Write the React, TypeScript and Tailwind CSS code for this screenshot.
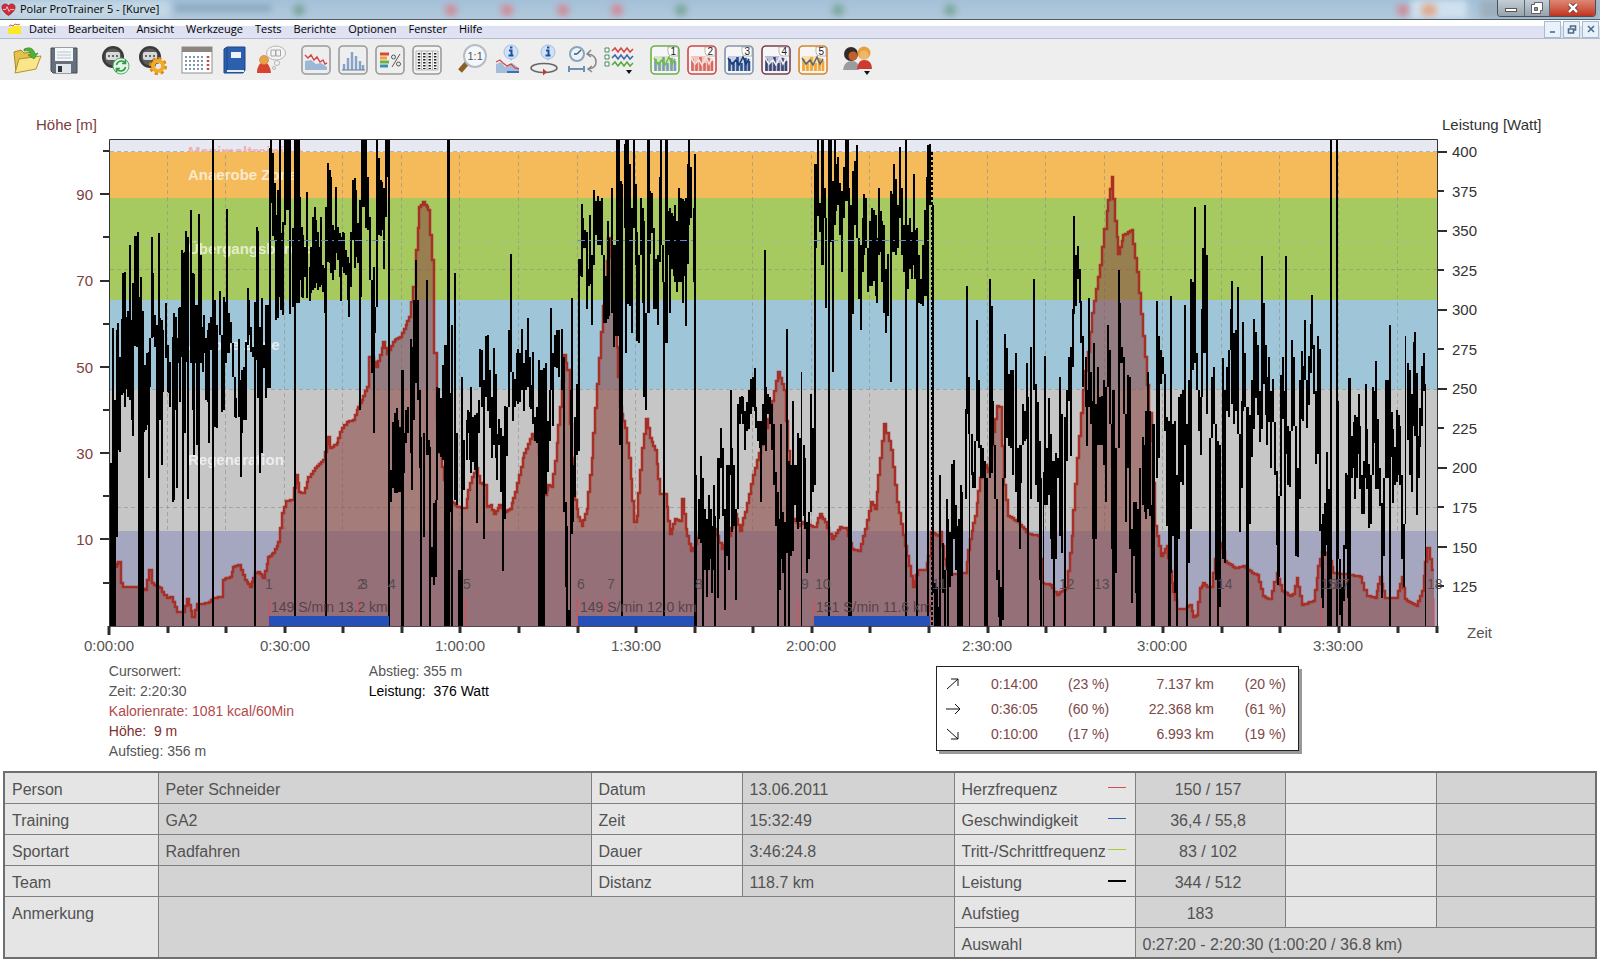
import type { ReactNode } from 'react'

type Section = {
  x: number
  y: number
  sx: number
  sy: number
  power: string
  height: string
}

// Each section keeps its samples in raster units, scaled to the plot by sx / sy.
// power: x,max,min[,width]   height: x,y
const sections: Section[] = [
  {
    x: 0, y: 100, sx: 3, sy: 3,
    power: `333,1090,1578,8 339,683,1578 345,900,1578 350,690,1310 354,668,1050 359,770,1055 364,658,884 369,520,880 374,515,920 379,650,866
      384,632,890 389,435,900 394,660,960 399,550,1007 404,407,738 409,408,740 414,395,735 418,590,900 422,640,1578,14 422,530,700 427,633,1578 432,870,995
      436,795,990,7 441,760,975 446,755,1135 449,715,860 454,410,715 459,520,710 464,645,740 472,675,1578,9 475,400,760 479,655,960 484,660,1095
      489,690,875 497,610,775 502,735,875 505,785,880 510,785,920 517,710,1205 521,640,1200 526,650,930 530,715,1165 535,625,790 540,620,905
      545,450,770 549,460,1578,6 554,455,1000 558,392,785 563,410,1198 571,330,790 577,520,930 581,522,1065 586,615,790 591,615,1035 596,343,1578
      602,465,790 607,680,815 611,645,760 618,715,900 623,690,905 627,670,1028 633,650,750 640,118,1578,6 645,600,980 650,675,985 658,573,705
      664,780,935 670,590,930 676,605,790 681,328,760 686,640,760 691,665,730 698,770,830 703,890,950 708,895,955 716,718,950 722,840,1130
      726,810,1000 731,800,960 736,725,960 742,565,735 747,600,705 752,680,755 758,740,770 764,605,1578 769,380,780 774,392,895 779,680,1120
      785,595,1060 790,735,805 796,615,895 801,615,865 806,615,865 808,145,865 813,118,310 818,160,408 823,250,420 828,345,660 833,270,655
      838,118,590 843,400,630 848,365,645 853,330,375 861,118,305,18 870,118,643 877,385,620 884,118,1548,6 892,118,610,15 898,290,540 904,380,590
      909,405,595 914,440,530 921,275,595 928,500,602 933,440,580 938,350,570 943,320,565 948,360,550 953,395,570 958,440,560 963,350,555
      968,495,575 974,505,640 978,320,1548 983,190,485 988,210,490 993,230,520 998,375,540 1003,390,510 1008,260,460 1013,380,480 1018,400,530
      1022,410,602 1027,395,500 1032,400,520 1037,450,525 1042,470,600 1047,490,652 1052,395,560 1058,240,420 1063,235,505 1068,270,470 1073,370,490
      1079,300,930 1083,300,590 1091,118,320,14 1098,118,385 1103,230,390 1108,350,540 1116,650,800,9 1116,560,820 1120,500,998 1124,620,700 1130,118,380
      1136,175,405 1141,240,408 1146,245,390 1151,265,508 1156,200,350 1162,118,230,12 1167,118,1578,6 1173,1110,1205 1179,965,1165 1184,940,1178
      1189,925,1178 1194,960,1175 1200,980,1175 1207,810,1578,7 1212,1000,1120 1217,930,1030 1223,920,1000 1231,718,1060 1236,740,1170 1241,600,960
      1247,480,850 1252,600,900 1258,870,1105 1263,1010,1578,8 1270,1000,1310 1280,540,1065 1285,1020,1065 1290,1040,1578 1296,1340,1430
      1301,1210,1455,7 1306,1200,1430 1311,860,1000 1316,865,1060 1321,895,1070 1328,795,1080 1337,735,1578,11 1345,118,1578,9 1350,880,1235
      1356,675,1578 1363,520,1200 1369,1000,1215 1378,1410,1578,9 1384,830,1578 1390,1020,1170 1399,960,1080 1403,930,1000 1409,935,1080
      1413,860,1120 1419,950,1085 1424,945,1110 1430,940,1270 1436,900,1000`,
    height: `345,1400 355,1385 362,1450 370,1460 415,1460 435,1470 447,1410 455,1450 480,1465 500,1495 515,1490 530,1535 550,1535 562,1498 577,1550
      590,1512 620,1510 640,1495 660,1490 668,1440 690,1430 700,1400 715,1395 735,1440 750,1460 765,1420 775,1415 790,1435 805,1370 820,1360 835,1325
      845,1240 857,1203 875,1200 888,1125 897,1175 910,1180 925,1130 945,1105 970,1080 985,1010 990,1045 1010,1030 1020,995 1040,965 1060,960 1070,930
      1085,900 1100,860 1107,770 1118,770 1128,800 1140,765 1150,725 1162,762 1178,725 1200,710 1228,650 1240,560 1248,450 1257,320 1270,307 1285,330
      1295,480 1303,760 1310,960 1320,1060 1333,1140 1345,1200 1370,1220 1395,1225 1405,1170 1415,1130 1427,1105 1440,1150`,
  },
  {
    x: 480, y: 120, sx: 3, sy: 2.958,
    power: `0,678,790 6,680,850 11,770,1240 16,640,820 22,635,860 28,740,910 34,820,1000 40,675,960 46,750,1000 51,930,1065 56,885,960 62,910,1100
      68,935,1335 74,845,1180 80,850,995 86,620,850 92,397,745 98,755,890 104,765,850 109,690,830 114,678,840 119,690,835 126,618,800 132,720,860
      137,680,800 142,585,790 148,700,850 153,785,855 158,685,900 163,880,950 169,850,955 176,710,1100 175,1100,1310 185,740,1497,20 191,735,1497,6 196,718,1105
      203,890,1040 208,800,950 213,555,800 219,690,905 225,635,730 231,620,735 237,620,760 244,618,800 250,700,1160 256,1130,1380 261,1200,1497
      267,1450,1497,7 270,800,1497,3 274,527,1225 279,1020,1190 285,880,1115 290,780,990 295,410,980 300,410,460 304,247,465 309,290,380 315,325,380
      320,330,560 325,440,490 330,280,485 336,400,605 342,207,430 348,240,340 354,225,370 360,240,370 366,230,400 371,400,600 377,460,600
      382,300,590 387,350,580 394,200,570 400,370,670 407,370,640,6 414,57,640,12 421,180,960,8 427,190,1467,6 433,72,320 438,57,690 443,57,545
      449,130,550 455,260,630 461,60,320 466,190,430 471,330,655 476,400,660 482,230,400 487,260,540 492,300,820 497,570,858 504,57,420,9
      510,210,395 516,215,335 522,320,560 527,410,560 532,400,605 538,170,420 543,57,370 549,370,480 553,480,1467,6 559,57,660,9 565,270,400
      570,260,570 575,275,440 580,285,460 585,250,480 591,300,510 597,200,480 602,230,480 607,235,540 612,240,460 616,230,610 622,130,425
      627,57,310 633,140,290 640,260,480 645,100,1497,5 650,1050,1497,3 656,1120,1240 663,995,1250 668,1060,1497 674,1150,1330 680,1180,1410
      686,1110,1330 691,1150,1300 695,1200,1400 700,1080,1330 706,1170,1497,6 712,1000,1415 716,1000,1180 721,910,1030 727,970,1170 733,1150,1450
      739,1020,1290 745,1020,1330 751,800,1050 756,970,1220 762,1020,1200 767,1150,1420 772,840,980 778,820,900 784,815,870 789,818,900
      795,860,975 801,835,920 806,800,915 812,765,870 817,760,850 823,735,860 828,850,910 833,890,950 838,890,970 843,890,1130 848,840,960
      853,385,960 858,790,980 864,810,870 869,820,900 875,840,975 881,900,1080 887,1040,1200 893,1100,1497 898,1180,1390 903,900,1300
      909,1160,1340 915,1190,1497 921,618,1280 927,1010,1497 934,1020,1290,6 938,830,1275 944,1020,1140 949,1020,1190 954,925,1210 960,940,1190
      964,745,1497,3 970,960,1170 975,1000,1210 981,1190,1340 986,1160,1300 992,810,980 998,910,1100 1003,130,1080 1008,130,380 1013,57,285
      1019,245,330 1027,57,430,9 1033,200,290 1038,370,555 1047,57,1467,6 1051,57,360,8 1057,180,745 1063,57,310 1068,130,270 1074,110,250
      1080,185,340 1085,210,450 1091,140,290 1100,57,240,12 1106,200,1467,7 1113,250,1467 1119,150,575 1125,120,310 1131,75,350 1137,380,530
      1141,370,620 1147,290,450 1152,220,400 1158,230,380 1163,400,510 1170,300,490 1175,260,490 1180,265,475 1186,280,520 1191,350,540
      1196,200,400 1201,270,390 1206,300,480 1212,310,570 1218,440,630 1224,395,580 1231,210,775 1236,220,390 1241,130,390 1247,175,400
      1253,250,380 1258,80,290 1264,200,400 1270,310,450 1278,57,1467,7 1284,310,500 1290,290,440 1295,330,470 1300,160,430 1305,325,470
      1311,320,1467,8 1317,400,540 1323,470,545 1329,370,550 1334,265,520 1339,170,520 1344,75,1467,6 1350,70,250 1358,990,1400 1364,1370,1497
      1370,1380,1497 1376,1440,1497`,
    height: `0,1075 12,1080 20,1145 32,1140 42,1165 58,1140 75,1160 90,1150 105,1100 128,1000 155,930 170,950 195,1110 205,1080 215,1085 225,1010
      240,850 253,695 262,740 270,900 280,1100 295,1175 305,1200 320,1150 335,1000 350,780 370,550 385,350 395,460 405,580 420,850 435,910 447,1000
      462,1190 470,1170 485,970 497,885 510,940 525,975 540,1105 555,1105 570,1225 585,1180 598,1185 605,1120 617,1210 632,1275 645,1255 665,1200
      705,1210 725,1270 745,1230 765,1165 780,1215 795,1160 820,1050 850,940 875,830 893,745 912,800 925,980 940,1180 955,1200 965,1190 1005,1205
      1020,1165 1035,1190 1055,1240 1080,1205 1100,1210 1115,1270 1135,1275 1155,1210 1172,1130 1185,1150 1200,1000 1213,900 1232,975 1250,1130
      1275,1260 1298,1380 1315,1330 1335,1330 1345,1290 1352,1220 1375,1230`,
  },
  {
    x: 940, y: 120, sx: 3, sy: 2.958,
    power: `0,1050,1497 9,1250,1400 14,1330,1497 19,1120,1290 24,1180,1497 29,1220,1380 35,1018,1350 42,1005,1240 47,1140,1330 52,1200,1497
      60,1180,1497,15 61,1080,1497 66,1100,1370 76,855,1120 80,490,870 85,760,930 88,835,1497,3 94,930,1050 98,1040,1090 104,950,1090 111,592,950
      117,770,970 123,960,1060 128,970,1060 135,1010,1497,7 141,1060,1497 149,470,800 154,550,1045 159,830,960 164,980,1120 170,1130,1360
      176,1330,1470 182,1380,1497,8 188,1060,1480 193,632,800 199,675,940 205,750,965 211,740,970 217,740,1050 226,688,1100 232,970,1190
      238,960,1270 243,960,1075 249,840,960 255,860,950 261,720,945 264,820,1497 273,670,1120 281,470,800 287,780,1080 292,835,1130
      298,950,1360 302,1060,1497,7 309,1040,1497,3 315,698,1140 321,970,1140 327,822,1110 333,930,1240 339,1010,1300,10 341,1300,1497 346,985,1260
      352,1000,1060 360,760,1230 366,870,1280 374,880,1497 379,800,1010 385,700,830 391,670,995 397,560,730 402,285,575 408,400,550
      413,373,470 418,440,540 423,535,660 429,640,790 436,700,850 440,800,965 445,528,850 452,745,900 457,830,1240 462,660,1497 467,840,1240
      474,732,960 480,820,960 486,815,960 491,770,1020 496,790,1130 504,605,780 509,680,900 515,1010,1270 520,800,1497,8 527,970,1340
      535,443,830 540,540,720 546,670,720 551,700,870 557,900,1190 563,755,1030 569,760,1270 575,1210,1430 581,1130,1290 587,1130,1400
      593,1150,1497,9 599,1030,1497 607,938,1140 613,960,1160 618,860,1180 623,745,1150 629,860,1170 635,1140,1497 641,900,1497,9 650,535,1060
      656,640,1000 663,680,780 668,700,750 674,870,920 681,880,1200 688,890,1497,10 693,520,1340 699,900,1230 703,890,1400 711,1050,1497,6
      717,820,1240 722,810,1070 727,800,1080 733,548,960 740,900,1497,7 746,770,1310 752,470,1210 757,480,740 763,258,720 769,690,800
      775,830,920 781,820,990 786,560,760 789,380,690 795,250,690 800,400,870 809,940,1497,7 816,760,880 822,732,900 828,1060,1360 834,950,1497
      840,960,1440,8 847,705,1300 853,800,1310 859,730,860 865,680,880 872,560,680 876,477,840 882,630,900 888,620,860 894,495,930
      899,940,1220 904,830,1090 909,598,860 915,690,850 922,1020,1497,7`,
    height: `0,1220 12,1300 30,1345 75,1340 90,1240 105,1170 120,1060 135,1020 145,1040 155,960 170,845 182,850 192,1080 205,1170 235,1190 265,1225
      293,1230 305,1370 330,1375 350,1405 378,1385 395,1230 410,1000 430,800 455,570 480,430 500,270 515,170 525,300 535,395 550,340 575,325 590,450
      615,700 635,950 645,1200 663,1290 680,1260 695,1370 710,1445 735,1445 750,1435 760,1470 770,1465 780,1385 790,1370 800,1380 815,1380 825,1300
      845,1250 855,1305 885,1325 910,1320 930,1335`,
  },
  {
    x: 1250, y: 110, sx: 3, sy: 2.85,
    power: `0,870,1180 5,770,990 11,597,910 17,632,820 23,670,870 28,800,945 35,415,910 41,550,780 46,670,870 51,760,955 57,705,890 63,800,1020
      69,768,890 75,900,1040 79,1030,1240 83,1100,1355 87,1100,1330 93,755,1040 98,705,880 105,800,1470,7 108,415,980 113,900,1070 118,915,1075
      124,655,870 130,705,900 136,900,1270 143,1020,1275 149,770,1110 154,687,880 159,730,885 164,598,770 170,770,905 176,700,840 181,610,750
      186,528,680 191,670,810 197,800,1010 203,645,980 208,680,1200 214,1180,1390 219,1150,1420 223,1120,1270 229,975,1240 234,1080,1470,9
      241,85,1470 259,85,1470 264,830,1280 269,1330,1440 275,1360,1470 281,1240,1400 287,1035,1250 292,1040,1390 299,765,1470,8 305,930,1050
      310,890,1020 315,870,1110 320,875,1050 325,810,980 330,900,1080 336,1040,1150 342,1000,1150 346,780,1050 351,910,1080 357,1010,1190
      362,1040,1180 367,790,950 373,800,950 378,715,1080 383,880,1080 388,1020,1130 394,1120,1390 400,1050,1270 406,770,1000 412,770,1050
      418,613,1470 424,860,990 429,910,1120 434,960,1070 439,855,1060 445,870,1040 450,900,1070 455,1040,1280 461,1180,1360 467,645,1160,3
      472,720,940 478,740,1040 484,810,1090 490,660,900 494,632,930 500,750,1155 505,930,1050 510,850,960 515,730,900 520,693,800 525,780,1470,3`,
    height: `0,1315 20,1325 38,1385 60,1395 80,1320 95,1370 120,1385 130,1380 140,1333 155,1410 190,1400 205,1300 215,1260 235,1270 250,1320
      300,1325 330,1330 350,1385 375,1390 390,1330 405,1390 440,1390 455,1330 465,1395 500,1415 515,1370 532,1248 545,1310 553,1310`,
  },
]

const parse = (data: string) => data.trim().split(/\s+/).map((s) => s.split(',').map(Number))

const powerBars = sections.flatMap((s) =>
  parse(s.power).map(([x, max, min, w = 5], i, all) => {
    let top = max
    let bottom = min
    // neighbouring bars have to touch, the trace never breaks
    if (i > 0 && x - all[i - 1][0] <= 8) {
      top = Math.min(top, all[i - 1][2])
      bottom = Math.max(bottom, all[i - 1][1])
    }
    return {
      x: s.x + (x - w / 2) / s.sx,
      y: s.y + top / s.sy,
      w: Math.max(w / s.sx, w < 5 ? 1 : 2),
      h: (bottom - top) / s.sy,
    }
  }),
)

const heightPoints = sections.flatMap((s) =>
  parse(s.height).map(([x, y]) => [s.x + x / s.sx, s.y + y / s.sy]),
)

// small stair steps between the samples, like the altimeter gives them
const heightLine = heightPoints
  .map(([x, y], i) => {
    if (i === 0) return `M${x} ${y}`
    const [px, py] = heightPoints[i - 1]
    const steps = Math.max(1, Math.round((x - px) / 2))
    let d = ''
    for (let k = 1; k <= steps; k++) {
      d += `H${Math.round(px + ((x - px) * k) / steps)}V${Math.round(py + ((y - py) * k) / steps)}`
    }
    return d
  })
  .join('')

const zones = [
  { y: 140, h: 12, color: '#e6e9f1' },
  { y: 152, h: 46, color: '#f5ba5a' },
  { y: 198, h: 102, color: '#a7ca60' },
  { y: 300, h: 89, color: '#9fc5d8' },
  { y: 389, h: 142, color: '#c6c6c6' },
  { y: 531, h: 95, color: '#a5a7c0' },
]

const zoneLabels = [
  { y: 180, text: 'Anaerobe Zone' },
  { y: 254, text: 'Übergangsbereich' },
  { y: 350, text: 'Aerobe Zone' },
  { y: 465, text: 'Regeneration' },
]

const lapBars = [
  { x: 269, w: 120, label: '149 S/min 13.2 km' },
  { x: 578, w: 116, label: '149 S/min 12.0 km' },
  { x: 814, w: 116, label: '151 S/min 11.6 km' },
]

const markers: [number, string][] = [
  [265, '1'], [357, '2'], [360, '3'], [388, '4'], [463, '5'], [577, '6'], [607, '7'], [695, '8'], [801, '9'], [815, '10'],
  [932, '11'], [1059, '12'], [1094, '13'], [1217, '14'], [1321, '15'], [1327, '16'], [1334, '17'], [1427, '18'],
]

const markerLines = [269, 358, 389, 465, 577, 605, 695, 798, 814, 930, 1064, 1094, 1217, 1321, 1328, 1434]

function Chart() {
  const minutes = Array.from({ length: 23 }, (_, i) => i)
  return (
    <svg viewBox="0 80 1600 577" className="block w-full font-['Liberation_Sans',Arial,sans-serif]" fontSize="15">
      <defs>
        <clipPath id="maxZone">
          <rect x="109" y="139" width="1328" height="13" />
        </clipPath>
      </defs>
      {zones.map((z) => (
        <rect key={z.y} x="109" y={z.y} width="1328" height={z.h} fill={z.color} shapeRendering="crispEdges" />
      ))}
      <g stroke="#8d9184" strokeOpacity="0.6" strokeDasharray="4 3">
        {minutes.slice(1).map((i) => (
          <line key={i} x1={Math.round(109 + i * 58.57) - 0.5} x2={Math.round(109 + i * 58.57) - 0.5} y1="155" y2="531" />
        ))}
        {[151.5, 269.5, 389.5, 507.5].map((y) => (
          <line key={y} x1="110" x2="1437" y1={y} y2={y} />
        ))}
      </g>
      <line x1="110" x2="1437" y1="240.5" y2="240.5" stroke="#9cc58b" strokeDasharray="7 4 2 4" />

      <g fontWeight="bold">
        <text x="188" y="157" fill="#f3b0a8" clipPath="url(#maxZone)">Maximaltraining</text>
        {zoneLabels.map((z) => (
          <text key={z.text} x="188" y={z.y} fill="#ffffff" fillOpacity="0.7">{z.text}</text>
        ))}
      </g>

      <path d={`${heightLine}V626H115Z`} fill="#8b4642" fillOpacity="0.57" />
      <path d={heightLine} fill="none" stroke="#a62f26" strokeWidth="2.5" />
      {markerLines.map((x) => (
        <line key={x} x1={x} x2={x} y1="598" y2="626" stroke="#dd4a55" />
      ))}

      <g fill="#000000" shapeRendering="crispEdges">
        {powerBars.map((b, i) => (
          <rect key={i} x={b.x} y={b.y} width={b.w} height={b.h} />
        ))}
      </g>
      <g stroke="#5f86d8" strokeDasharray="7 4 2 4">
        <line x1="270" x2="389" y1="240.5" y2="240.5" />
        <line x1="578" x2="695" y1="240.5" y2="240.5" />
        <line x1="814" x2="930" y1="240.5" y2="240.5" />
      </g>
      <line x1="932" x2="932" y1="152" y2="626" stroke="#000000" strokeWidth="2" strokeDasharray="3 2" />

      {lapBars.map((lap) => (
        <g key={lap.x}>
          <rect x={lap.x} y="616" width={lap.w} height="10" fill="#2450b8" />
          <text x={lap.x + 2} y="612" fontSize="14" fill="#574349">{lap.label}</text>
        </g>
      ))}
      <g fontSize="14" fill="#574b50">
        {markers.map(([x, label]) => (
          <text key={label} x={x} y="589">{label}</text>
        ))}
      </g>

      <path d="M109.5 626V139.5H1437.5V626" fill="none" stroke="#333333" />
      <line x1="109" x2="1438" y1="626.5" y2="626.5" stroke="#55484c" />

      <g stroke="#2e2e2e" strokeWidth="2">
        {[194, 281, 367, 453, 539].map((y) => (
          <line key={y} x1="100" x2="109" y1={y} y2={y} />
        ))}
        {[151, 237, 324, 410, 496, 583].map((y) => (
          <line key={y} x1="103" x2="109" y1={y} y2={y} />
        ))}
        {minutes.map((i) => (
          <line key={i} x1={Math.round(109 + i * 58.57)} x2={Math.round(109 + i * 58.57)} y1="626" y2={i === 0 ? 635 : 633} strokeWidth="3" />
        ))}
        <line x1="1437" x2="1437" y1="626" y2="633" strokeWidth="3" />
        {Array.from({ length: 12 }, (_, i) => (
          <line key={i} x1="1438" x2={i % 2 ? 1444 : 1447} y1={Math.round(152 + i * 39.45)} y2={Math.round(152 + i * 39.45)} />
        ))}
      </g>

      <g fill="#7c4040">
        <text x="36" y="130">Höhe [m]</text>
        {[90, 70, 50, 30, 10].map((v, i) => (
          <text key={v} x="93" y={Math.round(200 + i * 86.3)} textAnchor="end">{v}</text>
        ))}
      </g>
      <g fill="#333333">
        <text x="1442" y="130">Leistung [Watt]</text>
        {Array.from({ length: 12 }, (_, i) => (
          <text key={i} x="1452" y={Math.round(157 + i * 39.55)}>{400 - i * 25}</text>
        ))}
      </g>
      <g fill="#555555">
        {['0:00:00', '0:30:00', '1:00:00', '1:30:00', '2:00:00', '2:30:00', '3:00:00', '3:30:00'].map((t, i) => (
          <text key={t} x={Math.round(109 + i * 175.5)} y="651" textAnchor="middle">{t}</text>
        ))}
        <text x="1467" y="638">Zeit</text>
      </g>
    </svg>
  )
}

const framed = (stroke: string, fill: string) => (
  <rect x="2" y="2" width="28" height="28" rx="4" fill={fill} stroke={stroke} strokeWidth="1.6" />
)

function HrMonitor() {
  return (
    <>
      <circle cx="14" cy="13" r="11" fill="#3a3a3a" />
      <circle cx="14" cy="13" r="8.500" fill="#5c5c5c" />
      <rect x="7" y="8" width="14" height="8" rx="2" fill="#d9d9d9" />
      <path d="M9 12h2M13 12h2M17 12h2" stroke="#444" strokeWidth="1.6" />
    </>
  )
}

function InfoBubble({ x }: { x: number }) {
  return (
    <>
      <path d={`M${x - 2} 12l2 5l3-5z`} fill="#9fc3ea" />
      <circle cx={x} cy="8" r="7" fill="#cfe2f7" stroke="#9fbfe0" />
      <path d={`M${x - 1} 3.500h2.400M${x - 2} 6.500h2.500v4.500M${x - 2.5} 11.500h5`} fill="none" stroke="#1f4fa0" strokeWidth="2" />
    </>
  )
}

function CurveIcon({ n, frame, top, bars, line }: { n: number; frame: string; top: string; bars: string; line: string }) {
  return (
    <>
      {framed(frame, '#f6f6f6')}
      <path d="M5 27V12h15l7 3v12z" fill={top} />
      <path d="M6.500 27V15M10.500 27V18M14.500 27V13M18.500 27V19M22.500 27V14M26 27V17" stroke={bars} strokeWidth="2.6" />
      <path d="M5 14l4 6l4-4l3 5l4-8l3 7l3-5" fill="none" stroke={line} strokeWidth="1.5" />
      <path d="M19 3h8q2 0 2 2v7h-6q-4 0-4-4z" fill="#ffffff" stroke="#999" strokeWidth="0.700" />
      <text x="21.500" y="11" fontSize="10" fill="#222" className="font-['Liberation_Sans',Arial,sans-serif]">{n}</text>
    </>
  )
}

const toolGroups: { name: string; icon: ReactNode }[][] = [
  [
    {
      name: 'Öffnen',
      icon: (
        <>
          <path d="M3 8l7-2l3 3l10-1v4L9 16L5 28z" fill="#e2c24d" stroke="#a98724" />
          <path d="M8 15l22-3l-5 13L4 29z" fill="#fae68a" stroke="#b5932b" />
          <path d="M13 5q9-4 11 5l3-1l-4 6l-6-4l3-1q-1-4-7-3z" fill="#4fb33b" stroke="#2f8123" strokeWidth="0.600" />
        </>
      ),
    },
    {
      name: 'Speichern',
      icon: (
        <>
          <path d="M3 4h26v25H5l-2-2z" fill="#66707c" stroke="#454d57" />
          <rect x="7" y="4" width="18" height="13" fill="#f4f7fa" />
          <path d="M9 8h14M9 11h14M9 14h14" stroke="#b8c4d0" />
          <rect x="8" y="20" width="15" height="9" fill="#dfe6ec" />
          <rect x="10" y="22" width="4" height="6" fill="#30363d" />
        </>
      ),
    },
  ],
  [
    {
      name: 'Übertragung',
      icon: (
        <>
          <HrMonitor />
          <circle cx="22" cy="22" r="8" fill="#e4f4e6" stroke="#5cab6b" />
          <path d="M17.500 21q1-4 5-4q2 0 4 2M26.500 16v3.500H23M26.500 23q-1 4-5 4q-2 0-4-2M17.500 28v-3.500H21" fill="none" stroke="#2f9a4a" strokeWidth="1.700" />
        </>
      ),
    },
    {
      name: 'Einstellungen',
      icon: (
        <>
          <HrMonitor />
          <circle cx="22" cy="22" r="7" fill="none" stroke="#d98a12" strokeWidth="4" strokeDasharray="3 2.500" />
          <circle cx="22" cy="22" r="5" fill="none" stroke="#f3aa27" strokeWidth="4" />
          <circle cx="22" cy="22" r="2.500" fill="#e9e9e9" />
        </>
      ),
    },
  ],
  [
    {
      name: 'Kalender',
      icon: (
        <>
          <rect x="1" y="3" width="30" height="26" fill="#ffffff" stroke="#8e8e8e" />
          <rect x="1" y="3" width="30" height="5" fill="#8d8580" />
          <path d="M4 13h20M4 17h20M4 21h20M4 25h20" stroke="#8494ad" strokeWidth="2" strokeDasharray="2 2" />
          <path d="M27 12v14" stroke="#cc4444" strokeWidth="2.500" strokeDasharray="2 2" />
        </>
      ),
    },
    {
      name: 'Tagebuch',
      icon: (
        <>
          <path d="M6 5l3-2h18v23l-2 3H6z" fill="#2c5fae" stroke="#1d4687" />
          <path d="M9 27h17" stroke="#e5edf7" strokeWidth="2" />
          <path d="M9 4v22" stroke="#1d4687" />
          <rect x="13" y="8" width="10" height="6" fill="#eef3fa" />
        </>
      ),
    },
    {
      name: 'Person',
      icon: (
        <>
          <path d="M2 29q0-10 7-11q6 1 7 11z" fill="#d8432f" />
          <circle cx="9" cy="16" r="4.500" fill="#e9a04a" stroke="#c07c2a" strokeWidth="0.600" />
          <ellipse cx="21" cy="9" rx="9.500" ry="7" fill="#f4f4f4" stroke="#b5b5b5" />
          <path d="M16 6h4.500v6H16zM21 6h4.500v6H21z" fill="none" stroke="#a5a5a5" />
          <circle cx="22" cy="19" r="2.500" fill="#f4f4f4" stroke="#b5b5b5" />
          <circle cx="19" cy="24" r="1.500" fill="#f4f4f4" stroke="#b5b5b5" />
        </>
      ),
    },
  ],
  [
    {
      name: 'Kurve',
      icon: (
        <>
          {framed('#9b9b9b', '#eeeeee')}
          <path d="M5 26V17l6-1l5 4l5-1l6 4v3z" fill="#9db8d6" />
          <path d="M5 11l3 3l3-3l3 5l3-3l3 5l3-2l2 4l2-1" fill="none" stroke="#d84545" strokeWidth="1.400" />
        </>
      ),
    },
    {
      name: 'Verteilung',
      icon: (
        <>
          {framed('#9b9b9b', '#eeeeee')}
          <path d="M7 26V20M11 26V14M15 26V8M19 26V12M23 26V17M26 26V21" stroke="#86a2c4" strokeWidth="2.400" />
          <path d="M5 26h23" stroke="#647b99" />
        </>
      ),
    },
    {
      name: 'Zonen',
      icon: (
        <>
          {framed('#9b9b9b', '#eeeeee')}
          <path d="M6 10h9" stroke="#d84a33" strokeWidth="3" />
          <path d="M6 14h7" stroke="#f0a530" strokeWidth="3" />
          <path d="M6 18h9" stroke="#6bb04a" strokeWidth="3" />
          <path d="M6 22h8" stroke="#3f8fa8" strokeWidth="3" />
          <path d="M26 10l-8 13" stroke="#555" />
          <circle cx="19.500" cy="13" r="2" fill="none" stroke="#555" />
          <circle cx="24.500" cy="20" r="2" fill="none" stroke="#555" />
        </>
      ),
    },
    {
      name: 'Tabelle',
      icon: (
        <>
          {framed('#9b9b9b', '#f4f4f4')}
          <path d="M5 7h22M5 26h22M5 7v19M10.500 7v19M16 7v19M21.500 7v19M27 7v19" stroke="#aaaaaa" strokeWidth="0.800" />
          <path d="M8 9v16M13.300 9v16M18.700 9v16M24.200 9v16" stroke="#222" strokeWidth="2.400" strokeDasharray="1.500 1.500" />
        </>
      ),
    },
  ],
  [
    {
      name: 'Zoom 1:1',
      icon: (
        <>
          <path d="M11 19l-7 8" stroke="#8c5f26" strokeWidth="5" />
          <circle cx="19" cy="12" r="11" fill="#f5f8fb" stroke="#b4bdc6" strokeWidth="2" />
          <text x="11.500" y="16" fontSize="11" fill="#555" className="font-['Liberation_Sans',Arial,sans-serif]">1:1</text>
        </>
      ),
    },
    {
      name: 'Info Kurve',
      icon: (
        <>
          <path d="M3 29V20l5-2l4 5l7-4l7 5v5z" fill="#a3bddb" />
          <path d="M14 27h12v2H14z" fill="#3d6fb4" />
          <path d="M3 18l4-2l3 3l4 3l4-2l4 4l4 1" fill="none" stroke="#d84545" strokeWidth="1.300" />
          <InfoBubble x={18} />
        </>
      ),
    },
    {
      name: 'Info Runde',
      icon: (
        <>
          <ellipse cx="14" cy="24" rx="13" ry="4.500" fill="none" stroke="#666" strokeWidth="1.500" />
          <path d="M13 24.500v7l4-3.500z" fill="#c23636" />
          <InfoBubble x={18} />
        </>
      ),
    },
    {
      name: 'Zeit / Distanz',
      icon: (
        <>
          <circle cx="10" cy="10" r="7" fill="#eaf3fa" stroke="#8aa5b8" strokeWidth="2" />
          <path d="M10 10l4-4M10 10h-3" stroke="#3b5a70" strokeWidth="1.400" />
          <path d="M2 22v6M17 22v6M2 25h15" stroke="#6d90b0" strokeWidth="2" />
          <path d="M21 10q8 1 8 8q0 6-7 7M24 6l-4 4l4 3M25 22l-4 3l4 3" fill="none" stroke="#888" strokeWidth="1.500" />
        </>
      ),
    },
    {
      name: 'Kurven wählen',
      icon: (
        <>
          <path d="M1 4h4v4H1zM1 11h4v4H1zM1 18h4v4H1z" fill="#ffffff" stroke="#4b8a5a" />
          <path d="M8 7l3-3l3 4l3-4l3 4l3-4l3 4l3-3" fill="none" stroke="#d84545" strokeWidth="1.500" />
          <path d="M8 14l3-3l3 4l3-4l3 4l3-4l3 4l3-3" fill="none" stroke="#3f66a8" strokeWidth="1.500" />
          <path d="M8 21l3-3l3 4l3-4l3 4l3-4l3 4l3-3" fill="none" stroke="#53ab3f" strokeWidth="1.500" />
          <path d="M22 26h6l-3 4z" fill="#111" />
        </>
      ),
    },
  ],
  [
    { name: 'Ansicht 1', icon: <CurveIcon n={1} frame="#6fae4b" top="#d5e6c2" bars="#7d9db8" line="#6fbf3a" /> },
    { name: 'Ansicht 2', icon: <CurveIcon n={2} frame="#cf4646" top="#f2c5c0" bars="#d9695f" line="#f3e3e1" /> },
    { name: 'Ansicht 3', icon: <CurveIcon n={3} frame="#8794ad" top="#c3d2e8" bars="#2d5089" line="#1c3a70" /> },
    { name: 'Ansicht 4', icon: <CurveIcon n={4} frame="#7a3f52" top="#b9bdd6" bars="#3d4672" line="#f0f0f5" /> },
    { name: 'Ansicht 5', icon: <CurveIcon n={5} frame="#d8842c" top="#f8e0b3" bars="#f0a637" line="#5b6675" /> },
  ],
  [
    {
      name: 'Personen',
      icon: (
        <>
          <path d="M1 26q1-9 9-9q7 0 7 9z" fill="#9a9ca0" />
          <path d="M15 25q1-9 7-9q8 0 8 9z" fill="#cf3a2e" />
          <circle cx="9" cy="10" r="7" fill="#332b28" />
          <circle cx="11" cy="12" r="4.500" fill="#c25f2a" />
          <circle cx="22" cy="9" r="6.500" fill="#e3a23b" />
          <circle cx="22" cy="11" r="4.500" fill="#f0b76a" />
          <path d="M22 27h6l-3 4z" fill="#111" />
        </>
      ),
    },
  ],
]

const cursorLeft = [
  { text: 'Cursorwert:', color: 'text-[#555555]' },
  { text: 'Zeit: 2:20:30', color: 'text-[#555555]' },
  { text: 'Kalorienrate: 1081 kcal/60Min', color: 'text-[#b04a4a]' },
  { text: 'Höhe:  9 m', color: 'text-[#7c3030]' },
  { text: 'Aufstieg: 356 m', color: 'text-[#555555]' },
]

const slopes = [
  { d: 'M2 13L13 3M6 3h7v7', label: 'Anstieg', time: '0:14:00', share: '(23 %)', km: '7.137 km', kmShare: '(20 %)' },
  { d: 'M1 8h14M10 3l5 5l-5 5', label: 'Flach', time: '0:36:05', share: '(60 %)', km: '22.368 km', kmShare: '(61 %)' },
  { d: 'M2 3l11 10M13 6v7H6', label: 'Gefälle', time: '0:10:00', share: '(17 %)', km: '6.993 km', kmShare: '(19 %)' },
]

const summary = [
  ['Person', 'Peter Schneider', 'Datum', '13.06.2011', 'Herzfrequenz', 'bg-[#d45050]', '150 / 157'],
  ['Training', 'GA2', 'Zeit', '15:32:49', 'Geschwindigkeit', 'bg-[#3560b8]', '36,4 / 55,8'],
  ['Sportart', 'Radfahren', 'Dauer', '3:46:24.8', 'Tritt-/Schrittfrequenz', 'bg-[#a9cc3a]', '83 / 102'],
  ['Team', '', 'Distanz', '118.7 km', 'Leistung', 'bg-black', '344 / 512'],
]

function Label({ children, rowSpan }: { children: ReactNode; rowSpan?: number }) {
  return (
    <th rowSpan={rowSpan} scope="row" className="relative h-[31px] border border-[#7f7f7f] bg-[#e5e5e5] px-[7px] pt-[5px] text-left align-top font-normal whitespace-nowrap">
      {children}
    </th>
  )
}

function Value({ children, colSpan, rowSpan }: { children?: ReactNode; colSpan?: number; rowSpan?: number }) {
  return (
    <td colSpan={colSpan} rowSpan={rowSpan} className="border border-[#7f7f7f] bg-[#d3d3d3] px-[7px] pt-[5px] align-top">
      {children}
    </td>
  )
}

export default function App() {
  const menu = ['Datei', 'Bearbeiten', 'Ansicht', 'Werkzeuge', 'Tests', 'Berichte', 'Optionen', 'Fenster', 'Hilfe']

  return (
    <div className="w-full bg-white font-['Liberation_Sans',Arial,sans-serif]">
      <header className="font-['Open_Sans','Noto_Sans',sans-serif] text-[11px] text-black">
        <div className="relative flex h-5 items-center overflow-hidden border-b border-[#4c5d6b] bg-linear-to-b from-[#a3c0d9] to-[#b3c9da] pl-px">
          <div className="absolute inset-0 blur-[3px]">
            <div className="absolute inset-y-0 left-0 w-[170px] bg-[#c3d6e4]" />
            <div className="absolute top-1 left-[175px] h-2 w-24 bg-[#8ca9c2]" />
            {['left-[27.8%]', 'left-[31.3%]', 'left-[34.8%]', 'left-[38.2%]', 'left-[87.3%]'].map((l) => (
              <div key={l} className={`absolute top-1 h-3 w-3 rounded-full bg-[#d08a97] ${l}`} />
            ))}
            {['left-[18.3%]', 'left-[42.2%]', 'left-[52%]', 'left-[59%]'].map((l) => (
              <div key={l} className={`absolute top-1 h-3 w-3 rounded-full bg-[#7aa79a] ${l}`} />
            ))}
            <div className="absolute inset-y-0 left-[88.2%] w-14 bg-[#cfe0ef]" />
            <div className="absolute top-1 left-[88.8%] h-3 w-4 rounded-full bg-[#e2a88a]" />
            <div className="absolute inset-y-0 right-0 w-[120px] bg-[#9dafbd]" />
          </div>
          <svg viewBox="0 0 16 16" className="relative h-[15px] w-[15px]">
            <path d="M8 14.500C3 11 1 8.500 1 5.500C1 1.500 6 1 8 4C10 1 15 1.500 15 5.500C15 8.500 13 11 8 14.500z" fill="#cf2c3c" stroke="#8e1c28" strokeWidth="0.700" />
            <path d="M2 8h3l1.500-3l2 5l1.500-2h4" fill="none" stroke="#f7c9cd" />
          </svg>
          <span className="relative ml-1">Polar ProTrainer 5 - [Kurve]</span>
          <div className="absolute top-0 right-1 flex h-[17px] overflow-hidden rounded-b border border-t-0 border-[#45525d]">
            <button aria-label="Minimieren" className="flex w-[27px] items-end justify-center border-r border-[#5b6872] bg-linear-to-b from-[#c5ced5] to-[#96a2ad] pb-1">
              <span className="h-1 w-3 border border-[#555] bg-white" />
            </button>
            <button aria-label="Wiederherstellen" className="flex w-[25px] items-center justify-center border-r border-[#5b6872] bg-linear-to-b from-[#c5ced5] to-[#96a2ad]">
              <svg viewBox="0 0 12 12" className="h-3 w-3" fill="#fff" stroke="#444" strokeWidth="0.800">
                <path d="M3.500 0.500h8v8h-2v3h-9v-9h3z" />
                <path d="M3.500 5.500h3v3h-3z" fill="#8b969f" />
              </svg>
            </button>
            <button aria-label="Schließen" className="flex w-[45px] items-center justify-center bg-linear-to-b from-[#dc8873] to-[#c0301c]">
              <svg viewBox="0 0 12 10" className="h-[10px] w-3">
                <path d="M2 1l8 8M10 1l-8 8" stroke="#5a1c14" strokeWidth="4" />
                <path d="M2 1l8 8M10 1l-8 8" stroke="#fff" strokeWidth="2.500" />
              </svg>
            </button>
          </div>
        </div>
        <nav className="flex h-[19px] items-center border-b border-[#b4bbd0] bg-linear-to-b from-white from-30% via-[#dde1f1] via-35% to-[#dfe3f3] pl-2">
          <svg viewBox="0 0 14 12" className="h-3 w-[14px]">
            <path d="M0 11V5h4l1-2h8v8z" fill="#fbe926" />
            <path d="M1 3l2-1l2 1l2-2l3 1l2-1" fill="none" stroke="#c2603c" />
          </svg>
          <div className="ml-[7px] flex gap-3">
            {menu.map((m) => (
              <button key={m}>{m}</button>
            ))}
          </div>
          <div className="mr-px ml-auto flex gap-0.5 text-[#4f6c88]">
            {['M4 10h5', 'M3.500 7h5v4h-5zM5.500 6V4h5v4H9', 'M4 4l6 6M10 4l-6 6'].map((d, i) => (
              <button key={d} aria-label={['Fenster minimieren', 'Fenster wiederherstellen', 'Fenster schließen'][i]} className="flex h-[17px] w-[17px] items-center justify-center border border-[#a9bccf] bg-[#e9f2fb]">
                <svg viewBox="0 0 14 14" className="h-[14px] w-[14px]" fill="none" stroke="currentColor" strokeWidth="1.600">
                  <path d={d} />
                </svg>
              </button>
            ))}
          </div>
        </nav>
        <div className="flex h-[41px] items-center bg-[#eeeeee] pl-2">
          {toolGroups.map((group, g) => (
            <div key={g} className={g === 0 ? 'flex' : g === 1 ? 'ml-[14px] flex' : 'ml-2 flex'}>
              {group.map((tool) => (
                <button key={tool.name} aria-label={tool.name} className="flex w-[37px] justify-center">
                  <svg viewBox="0 0 32 32" className="h-8 w-8">{tool.icon}</svg>
                </button>
              ))}
            </div>
          ))}
        </div>
      </header>

      <main>
        <Chart />

        <section className="flex pl-[6.8%] text-sm leading-5">
          <div className="w-[260px] pt-1 whitespace-pre">
            {cursorLeft.map((c) => (
              <p key={c.text} className={c.color}>{c.text}</p>
            ))}
          </div>
          <div className="pt-1 whitespace-pre">
            <p className="text-[#555555]">Abstieg: 355 m</p>
            <p className="text-black">Leistung:  376 Watt</p>
          </div>
          <div className="mt-[9px] mr-[301px] ml-auto h-[85px] w-[363px] border border-[#222] bg-white px-2 pt-1 shadow-[3px_3px_0_#999]">
            <table className="w-full table-fixed text-[#7c4848]">
              <tbody>
                {slopes.map((s) => (
                  <tr key={s.label} className="h-[25px]">
                    <th scope="row" className="w-[46px]">
                      <svg viewBox="0 0 16 16" className="h-4 w-4" fill="none" stroke="#111" role="img" aria-label={s.label}>
                        <path d={s.d} />
                      </svg>
                    </th>
                    <td className="w-[77px]">{s.time}</td>
                    <td>{s.share}</td>
                    <td className="w-[74px] text-right">{s.km}</td>
                    <td className="w-[76px] pr-1 text-right">{s.kmShare}</td>
                  </tr>
                ))}
              </tbody>
            </table>
          </div>
        </section>

        <div className="px-[3px] pt-[10px] pb-1">
          <table className="w-full table-fixed border-collapse border-2 border-[#6f6f6f] text-base text-[#525252]">
            <colgroup>
              <col className="w-[154px]" />
              <col />
              <col className="w-[151px]" />
              <col className="w-[212px]" />
              <col className="w-[181px]" />
              <col className="w-[150px]" />
              <col className="w-[151px]" />
              <col className="w-[160px]" />
            </colgroup>
            <tbody>
              {summary.map(([a, b, c, d, e, line, f]) => (
                <tr key={a}>
                  <Label>{a}</Label>
                  <Value>{b}</Value>
                  <Label>{c}</Label>
                  <Value>{d}</Value>
                  <Label>
                    {e}
                    <span className={`absolute top-[14px] right-[9px] w-[18px] ${line} ${e === 'Leistung' ? 'h-0.5' : 'h-px'}`} />
                  </Label>
                  <Value><div className="pr-1 text-center">{f}</div></Value>
                  <Label>{''}</Label>
                  <Value />
                </tr>
              ))}
              <tr>
                <Label rowSpan={2}>Anmerkung</Label>
                <Value colSpan={3} rowSpan={2} />
                <Label>Aufstieg</Label>
                <Value><div className="pr-5 text-center">183</div></Value>
                <Label>{''}</Label>
                <Value />
              </tr>
              <tr>
                <Label>Auswahl</Label>
                <Value colSpan={3}>0:27:20 - 2:20:30 (1:00:20 / 36.8 km)</Value>
              </tr>
            </tbody>
          </table>
        </div>
      </main>
    </div>
  )
}
